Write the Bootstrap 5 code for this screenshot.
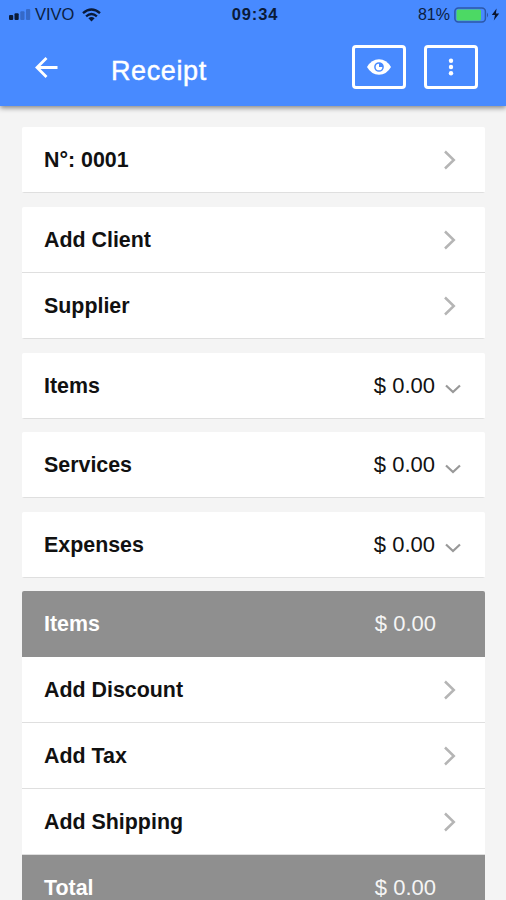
<!DOCTYPE html>
<html lang="en">
<head>
<meta charset="utf-8">
<meta name="viewport" content="width=device-width, initial-scale=1">
<title>Receipt</title>
<link href="https://cdn.jsdelivr.net/npm/bootstrap@5.3.0/dist/css/bootstrap.min.css" rel="stylesheet">
<style>
  body { font-family: "Liberation Sans", Arial, sans-serif; background: #f4f4f4; color: #111; height: 900px; overflow: hidden; }
  .app-header { height: 106px; background: #488aff; box-shadow: 0 2px 5px rgba(0,0,0,.45); }
  .status-bar { height: 30px; color: #0b1e42; font-size: 16px; line-height: 29px; padding: 0 6px 2px 8px; display: grid; grid-template-columns: 1fr auto 1fr; }
  .carrier { font-size: 16.5px; margin-left: 4px; margin-right: 8px; }
  .clock { font-weight: 700; font-size: 16.5px; letter-spacing: .9px; color: #0a1a38; margin-left: 2px; }
  .toolbar { height: 74px; padding: 0 28px 0 33px; }
  .page-title { font-size: 27px; letter-spacing: .6px; -webkit-text-stroke: .45px #fff; line-height: 32px; margin: 7px 0 0 52px; }
  .tool-btn { width: 54px; height: 44px; border: 3px solid #fff; border-radius: 4px; }
  .tool-group { gap: 18px; margin-top: -1px; }
  .sheet { padding: 21.4px 21px 0 22px; gap: 13.6px; }
  .panel { border-radius: 2px; overflow: hidden; }
  .line-item { height: 66px; padding: 1px 24px 0 22px; background: #fff; border-bottom: 1px solid #dfdfdf; }
  .line-label { font-weight: 700; font-size: 21.4px; line-height: 26px; }
  .amount { font-size: 22px; line-height: 26px; }
  .line-item.summary { background: #8f8f8f; border-color: #8f8f8f; color: #fff; padding-right: 49px; }
  .summary .amount { color: #f5f5f5; }
  .go-icon { margin-right: 5px; }
  .chev-down { margin: 7px 0 0 10px; }
</style>
</head>
<body>
<header class="app-header position-relative">
  <div class="status-bar">
    <div class="d-flex align-items-center">
      <svg width="23" height="11" viewBox="0 0 23 11"><g fill="#0b1b38"><rect x="1" y="6" width="4.2" height="5" rx="1"/><rect x="6.5" y="4.3" width="4.2" height="6.7" rx="1"/></g><g fill="#3569c8"><rect x="12.3" y="2.2" width="4.2" height="8.8" rx="1"/><rect x="18" y="0" width="4.2" height="11" rx="1"/></g></svg>
      <span class="carrier">VIVO</span>
      <svg width="19" height="14" viewBox="0 0 19 14" fill="none" stroke="#0a1a38" stroke-width="2.4"><path d="M1 5.1Q9.500-2.200 18 5.100M4.100 8.300Q9.500 3.800 14.900 8.300"/><path d="M6.400 10.300Q9.500 7.900 12.600 10.300L9.500 13.600Z" fill="#0a1a38" stroke="none"/></svg>
    </div>
    <span class="clock">09:34</span>
    <div class="d-flex align-items-center justify-content-end">
      <span>81%</span>
      <svg class="ms-1" width="37" height="16" viewBox="0 0 37 16"><rect x=".9" y=".9" width="30.500" height="14.200" rx="3.500" fill="none" stroke="#2c58a8" stroke-width="1.500"/><rect x="2.500" y="2.500" width="24.500" height="11" rx="1.500" fill="#4cd964"/><path d="M33 5.500q2.200 2.500 0 5z" fill="#2c58a8"/></svg>
      <svg width="9" height="13" viewBox="0 0 9 13"><path d="M5.600.5.800 7H4L2.800 12.500 8.200 5.500H4.900Z" fill="#0a1530"/></svg>
    </div>
  </div>
  <div class="toolbar d-flex align-items-center text-white">
    <svg width="26" height="24" viewBox="0 0 26 24" fill="none" stroke="#fff" stroke-width="2.800"><path d="M24.500 12.500H4M13.500 3 4 12.500l9.500 9.500"/></svg>
    <h1 class="page-title">Receipt</h1>
    <div class="tool-group ms-auto d-flex">
      <button class="tool-btn bg-transparent p-0 d-flex align-items-center justify-content-center" aria-label="Preview">
        <svg width="24" height="16" viewBox="0 0 24 16"><path d="M0 8Q4.500.200 12 .200T24 8Q19.500 15.800 12 15.800T0 8Z" fill="#fff"/><circle cx="12" cy="8" r="4.100" fill="none" stroke="#488aff" stroke-width="1.500"/><path d="M12 4v4h4A4 4 0 0 0 12 4Z" fill="#488aff"/></svg>
      </button>
      <button class="tool-btn bg-transparent p-0 d-flex align-items-center justify-content-center" aria-label="More">
        <svg width="6" height="18" viewBox="0 0 6 18" fill="#fff"><circle cx="3" cy="2.700" r="2.200"/><circle cx="3" cy="9" r="2.200"/><circle cx="3" cy="15.300" r="2.200"/></svg>
      </button>
    </div>
  </div>
</header>

<svg class="d-none">
  <symbol id="go" viewBox="0 0 12 20"><path d="M1 1.500 9.800 10 1 18.500" fill="none" stroke="#b5b5b5" stroke-width="2.500"/></symbol>
  <symbol id="expand" viewBox="0 0 16 10"><path d="M1 1.500 8 8 15 1.500" fill="none" stroke="#999" stroke-width="2.200"/></symbol>
</svg>

<main class="sheet d-flex flex-column">
  <section class="panel">
    <div class="line-item d-flex align-items-center justify-content-between"><span class="line-label">N°: 0001</span><svg class="go-icon" width="12" height="20"><use href="#go"/></svg></div>
  </section>
  <section class="panel">
    <div class="line-item d-flex align-items-center justify-content-between"><span class="line-label">Add Client</span><svg class="go-icon" width="12" height="20"><use href="#go"/></svg></div>
    <div class="line-item d-flex align-items-center justify-content-between"><span class="line-label">Supplier</span><svg class="go-icon" width="12" height="20"><use href="#go"/></svg></div>
  </section>
  <section class="panel">
    <div class="line-item d-flex align-items-center"><span class="line-label me-auto">Items</span><span class="amount">$ 0.00</span><svg class="chev-down" width="16" height="10"><use href="#expand"/></svg></div>
  </section>
  <section class="panel">
    <div class="line-item d-flex align-items-center"><span class="line-label me-auto">Services</span><span class="amount">$ 0.00</span><svg class="chev-down" width="16" height="10"><use href="#expand"/></svg></div>
  </section>
  <section class="panel">
    <div class="line-item d-flex align-items-center"><span class="line-label me-auto">Expenses</span><span class="amount">$ 0.00</span><svg class="chev-down" width="16" height="10"><use href="#expand"/></svg></div>
  </section>
  <section class="panel">
    <div class="line-item summary d-flex align-items-center justify-content-between"><span class="line-label">Items</span><span class="amount">$ 0.00</span></div>
    <div class="line-item d-flex align-items-center justify-content-between"><span class="line-label">Add Discount</span><svg class="go-icon" width="12" height="20"><use href="#go"/></svg></div>
    <div class="line-item d-flex align-items-center justify-content-between"><span class="line-label">Add Tax</span><svg class="go-icon" width="12" height="20"><use href="#go"/></svg></div>
    <div class="line-item d-flex align-items-center justify-content-between"><span class="line-label">Add Shipping</span><svg class="go-icon" width="12" height="20"><use href="#go"/></svg></div>
    <div class="line-item summary d-flex align-items-center justify-content-between"><span class="line-label">Total</span><span class="amount">$ 0.00</span></div>
  </section>
</main>
<script src="https://cdn.jsdelivr.net/npm/bootstrap@5.3.0/dist/js/bootstrap.bundle.min.js"></script>
</body>
</html>
